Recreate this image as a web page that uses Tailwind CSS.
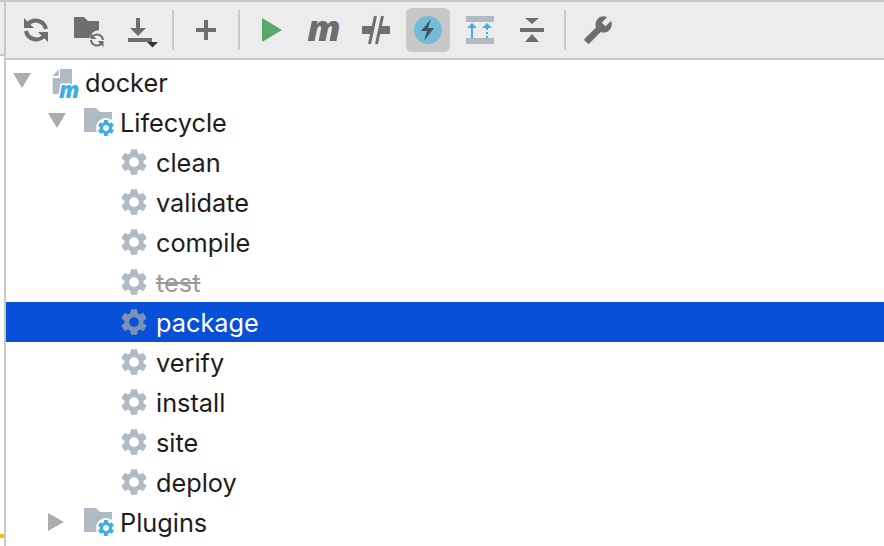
<!DOCTYPE html>
<html lang="en">
<head>
    <meta charset="UTF-8">
    <title>Maven</title>
    <script src="https://cdn.jsdelivr.net/npm/@tailwindcss/browser@4"></script>
</head>
<body class="bg-white text-[#1d1d1d] font-['Inter',sans-serif] text-[25.3px] overflow-hidden">

    <!-- Shared icons -->
    <svg class="hidden">
        <symbol id="gear" viewBox="0 0 24 24">
            <path fill-rule="evenodd" d="M19.14 12.94c.04-.3.06-.61.06-.94 0-.32-.02-.64-.07-.94l2.03-1.58c.18-.14.23-.41.12-.61l-1.92-3.32c-.12-.22-.37-.29-.59-.22l-2.39.96c-.5-.38-1.03-.7-1.62-.94l-.36-2.54c-.04-.24-.24-.41-.48-.41h-3.84c-.24 0-.43.17-.47.41l-.36 2.54c-.59.24-1.13.57-1.62.94l-2.39-.96c-.22-.08-.47 0-.59.22L2.74 8.87c-.12.21-.08.47.12.61l2.03 1.58c-.05.3-.09.63-.09.94s.02.64.07.94l-2.03 1.58c-.18.14-.23.41-.12.61l1.92 3.32c.12.22.37.29.59.22l2.39-.96c.5.38 1.03.7 1.62.94l.36 2.54c.05.24.24.41.48.41h3.84c.24 0 .44-.17.47-.41l.36-2.54c.59-.24 1.13-.56 1.62-.94l2.39.96c.22.08.47 0 .59-.22l1.92-3.32c.12-.22.07-.47-.12-.61l-2.01-1.58zM12 15.6c-1.98 0-3.6-1.62-3.6-3.6s1.62-3.6 3.6-3.6 3.6 1.62 3.6 3.6-1.62 3.6-3.6 3.6z"/>
        </symbol>
        <symbol id="folder" viewBox="0 0 32 28">
            <path fill="#afbac2" d="M0 0h12l4 4h12v20H0z"/>
            <circle cx="22" cy="20" r="10" fill="#fff"/>
            <use href="#gear" x="12" y="10" width="20" height="20" fill="#3daee9"/>
        </symbol>
    </svg>

    <div class="flex h-[546px]">
        <!-- Left strip -->
        <div class="w-[6px] border-r-2 border-[#c8c8c8] flex flex-col">
            <div class="h-[56px] bg-[#ececec] border-t-2 border-b-2 border-[#c8c8c8]"></div>
            <div class="w-1 h-1 mt-[478px] bg-[#f0c800]"></div>
        </div>

        <div class="flex-1 min-w-0">
            <!-- Toolbar -->
            <div class="h-[60px] flex items-center gap-2 pl-2 bg-[#ececec] border-y-2 border-[#c8c8c8]">
                <button class="w-11 h-11 flex items-center justify-center">
                    <svg width="44" height="44" fill="none" stroke="#6e6e6e" stroke-width="4">
                        <path d="M14 16a10.500 10.500 0 0 1 18 5"/>
                        <path d="M30 28a10.500 10.500 0 0 1-18-5"/>
                        <path fill="#6e6e6e" stroke="none" d="M10 10v10h10zM34 34V24H24z"/>
                    </svg>
                </button>
                <button class="w-11 h-11 flex items-center justify-center">
                    <svg width="44" height="44">
                        <path fill="#6e6e6e" d="M8 9h10l4 4h11v9.200a10 10 0 0 0-9.500 7.800H8z"/>
                        <g fill="none" stroke="#6e6e6e" stroke-width="2">
                            <path d="M27 28a6 6 0 0 1 10 4"/>
                            <path d="M35 36a6 6 0 0 1-10-4"/>
                        </g>
                        <path fill="#6e6e6e" d="M24.500 25v6h6zM37.500 39v-6h-6z"/>
                    </svg>
                </button>
                <button class="w-11 h-11 flex items-center justify-center">
                    <svg width="44" height="44">
                        <path fill="#6e6e6e" d="M18 10h4v10h6l-8 8-8-8h6zM10 30h24v4H10z"/>
                        <path fill="#333" d="M29 34h11l-5.500 5.500z"/>
                    </svg>
                </button>
                <div class="w-0.5 h-10 mx-0.5 bg-[#c8c8c8]"></div>
                <button class="w-11 h-11 flex items-center justify-center">
                    <svg width="44" height="44"><path fill="#6e6e6e" d="M20 12h4v8h8v4h-8v8h-4v-8h-8v-4h8z"/></svg>
                </button>
                <div class="w-0.5 h-10 mx-0.5 bg-[#c8c8c8]"></div>
                <button class="w-11 h-11 flex items-center justify-center">
                    <svg width="44" height="44"><path fill="#59a869" d="M12 10l20 12-20 12z"/></svg>
                </button>
                <button class="w-11 h-11 flex items-center justify-center font-['Open_Sans',sans-serif] font-extrabold italic text-[36px] leading-none text-[#6e6e6e] pb-1">m</button>
                <button class="w-11 h-11 flex items-center justify-center">
                    <svg width="44" height="44">
                        <path fill="#6e6e6e" d="M8 18h10v8H8zM26 18h10v8H26z"/>
                        <path stroke="#6e6e6e" stroke-width="3" d="M21.500 8l-6 28M28.500 8l-6 28"/>
                    </svg>
                </button>
                <button class="w-11 h-11 flex items-center justify-center rounded-md bg-[#c8c8c8]">
                    <svg width="44" height="44">
                        <circle cx="22" cy="22" r="14" fill="#75bcd8"/>
                        <path fill="#3e5563" d="M25 11l-10 12h6l-3 10 10-13h-6z"/>
                    </svg>
                </button>
                <button class="w-11 h-11 flex items-center justify-center">
                    <svg width="44" height="44">
                        <path fill="#afbac2" d="M8 8h28v6H8zM8 30h28v6H8z"/>
                        <path fill="#3daee9" d="M9 20l5-5 5 5zM24 20l5-5 5 5z"/>
                        <path stroke="#3daee9" stroke-width="2" d="M14 20v10"/>
                        <path stroke="#3daee9" stroke-width="2" stroke-dasharray="2 2" d="M29 20v10"/>
                    </svg>
                </button>
                <button class="w-11 h-11 flex items-center justify-center">
                    <svg width="44" height="44">
                        <path fill="#6e6e6e" d="M10 20h24v4H10zM15 10h14l-7 6zM22 26l7 8H15z"/>
                    </svg>
                </button>
                <div class="w-0.5 h-10 mx-0.5 bg-[#c8c8c8]"></div>
                <button class="w-11 h-11 flex items-center justify-center">
                    <svg width="30" height="30" viewBox="0 0 24 24"><path fill="#6e6e6e" transform="translate(24 0) scale(-1 1)" d="M22.700 19l-9.100-9.100c.9-2.300.4-5-1.500-6.900-2-2-5-2.400-7.400-1.300L9 6 6 9 1.600 4.700C.4 7.100.9 10.100 2.900 12.100c1.900 1.900 4.600 2.400 6.900 1.500l9.100 9.100c.4.4 1 .4 1.400 0l2.300-2.300c.5-.4.5-1.100.1-1.400z"/></svg>
                </button>
            </div>

            <!-- Tree -->
            <ul class="pt-[2px]">
                <li class="h-10 flex items-center pl-[7px]">
                    <svg class="w-[18px] h-[18px]"><path fill="#acacac" d="M0 0h18l-9 15z"/></svg>
                    <svg class="ml-[21px] mr-[3px] w-[30px] h-10 overflow-visible" viewBox="0 0 30 40">
                        <path fill="#afbac2" d="M8 7H20V32H.7V16H8zM.7 14L6.700 7V14z"/>
                        <text x="7" y="36" font-family="Open Sans" font-weight="800" font-style="italic" font-size="22" fill="#3daee9" stroke="#fff" stroke-width="3" paint-order="stroke">m</text>
                    </svg>
                    <span class="pt-[2px]">docker</span>
                </li>
                <li class="h-10 flex items-center pl-[42px]">
                    <svg class="w-[18px] h-[18px]"><path fill="#acacac" d="M0 0h18l-9 15z"/></svg>
                    <svg class="ml-[18px] mr-[4px] w-[32px] h-[28px]"><use href="#folder"/></svg>
                    <span class="pt-[2px]">Lifecycle</span>
                </li>
                <li class="h-10 flex items-center pl-[112px]"><svg class="w-[32px] h-[32px] fill-[#afbac2] mr-[6px]"><use href="#gear"/></svg><span class="pt-[2px]">clean</span></li>
                <li class="h-10 flex items-center pl-[112px]"><svg class="w-[32px] h-[32px] fill-[#afbac2] mr-[6px]"><use href="#gear"/></svg><span class="pt-[2px]">validate</span></li>
                <li class="h-10 flex items-center pl-[112px]"><svg class="w-[32px] h-[32px] fill-[#afbac2] mr-[6px]"><use href="#gear"/></svg><span class="pt-[2px]">compile</span></li>
                <li class="h-10 flex items-center pl-[112px]"><svg class="w-[32px] h-[32px] fill-[#afbac2] mr-[6px]"><use href="#gear"/></svg><span class="pt-[2px] line-through text-[#9a9a9a]">test</span></li>
                <li class="h-10 flex items-center pl-[112px] bg-[#0850d8] text-white"><svg class="w-[32px] h-[32px] fill-[#7a92b8] mr-[6px]"><use href="#gear"/></svg><span class="pt-[2px]">package</span></li>
                <li class="h-10 flex items-center pl-[112px]"><svg class="w-[32px] h-[32px] fill-[#afbac2] mr-[6px]"><use href="#gear"/></svg><span class="pt-[2px]">verify</span></li>
                <li class="h-10 flex items-center pl-[112px]"><svg class="w-[32px] h-[32px] fill-[#afbac2] mr-[6px]"><use href="#gear"/></svg><span class="pt-[2px]">install</span></li>
                <li class="h-10 flex items-center pl-[112px]"><svg class="w-[32px] h-[32px] fill-[#afbac2] mr-[6px]"><use href="#gear"/></svg><span class="pt-[2px]">site</span></li>
                <li class="h-10 flex items-center pl-[112px]"><svg class="w-[32px] h-[32px] fill-[#afbac2] mr-[6px]"><use href="#gear"/></svg><span class="pt-[2px]">deploy</span></li>
                <li class="h-10 flex items-center pl-[42px]">
                    <svg class="w-[18px] h-[18px]"><path fill="#acacac" d="M0 0l16 9-16 9z"/></svg>
                    <svg class="ml-[18px] mr-[4px] w-[32px] h-[28px]"><use href="#folder"/></svg>
                    <span class="pt-[2px]">Plugins</span>
                </li>
            </ul>
        </div>
    </div>
</body>
</html>
